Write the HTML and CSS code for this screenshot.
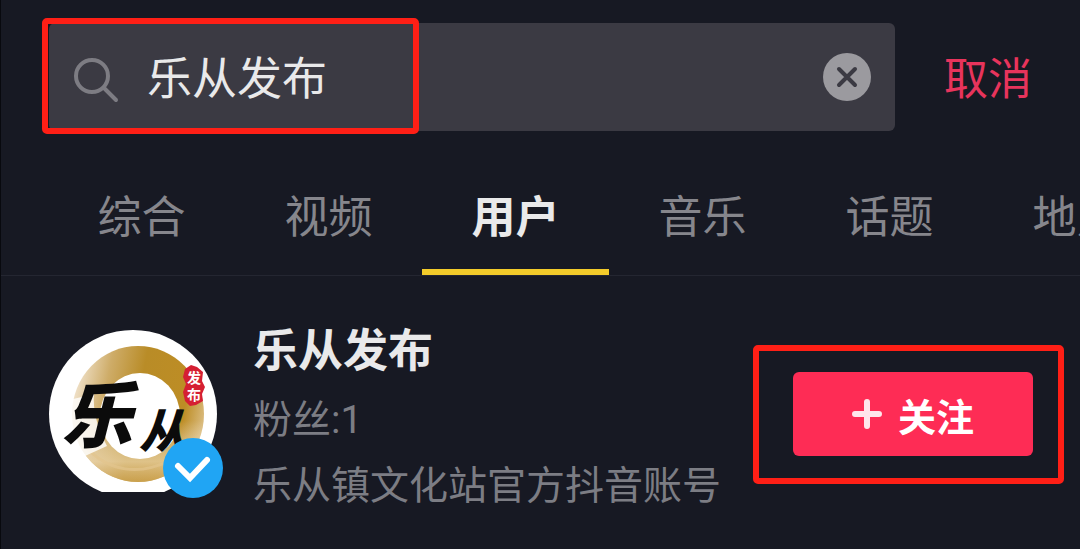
FILE: index.html
```html
<!DOCTYPE html>
<html lang="zh-CN">
<head>
    <meta charset="UTF-8">
    <meta name="viewport" content="width=device-width, initial-scale=1">
    <title>乐从发布</title>
    <link rel="stylesheet" href="styles.css">
</head>
<body>
    <form class="header">
        <div class="search-box">
            <label class="search-label" for="keyword" aria-label="搜索">
                <svg class="search-icon" viewBox="0 0 48 48" fill="none" stroke="#7d7c83" stroke-width="4" stroke-linecap="round">
                    <circle cx="19" cy="20" r="16"/>
                    <path d="M31 32L43 44"/>
                </svg>
            </label>
            <input class="search-input" type="text" id="keyword" value="乐从发布">
            <button class="clear-button" type="reset" aria-label="清除">
                <svg viewBox="0 0 48 48">
                    <circle cx="24" cy="24" r="24" fill="#9b9a9f"/>
                    <path d="M16 16L32 32M32 16L16 32" fill="none" stroke="#3b3a43" stroke-width="4" stroke-linecap="round"/>
                </svg>
            </button>
            <div class="mark mark-search"></div>
        </div>
        <button class="cancel-button" type="button">取消</button>
    </form>

    <nav class="tabs">
        <button class="tab">综合</button>
        <button class="tab">视频</button>
        <button class="tab active">用户</button>
        <button class="tab">音乐</button>
        <button class="tab">话题</button>
        <button class="tab">地点</button>
    </nav>

    <main class="user">
        <div class="avatar">
            <svg class="avatar-picture" viewBox="0 0 168 168">
                <defs>
                    <clipPath id="avatarShape">
                        <path d="M0 0H168V162H0Z"/>
                    </clipPath>
                    <linearGradient id="gold" x1="0" y1="0.3" x2="1" y2="0.5">
                        <stop offset="0" stop-color="#f3e6d2"/>
                        <stop offset="0.25" stop-color="#ceac68"/>
                        <stop offset="0.5" stop-color="#b98c27"/>
                        <stop offset="0.85" stop-color="#bd8d25"/>
                        <stop offset="1" stop-color="#d8b878"/>
                    </linearGradient>
                    <linearGradient id="fade" x1="0" y1="0" x2="0" y2="1">
                        <stop offset="0.55" stop-color="#fff" stop-opacity="0"/>
                        <stop offset="0.85" stop-color="#f2dfbd" stop-opacity="0.65"/>
                        <stop offset="1" stop-color="#d9b473" stop-opacity="0.5"/>
                    </linearGradient>
                </defs>
                <g clip-path="url(#avatarShape)">
                    <circle cx="84" cy="84" r="84" fill="#fff"/>
                    <ellipse cx="89" cy="84" rx="66" ry="68" fill="url(#gold)"/>
                    <ellipse cx="89" cy="84" rx="66" ry="68" fill="url(#fade)"/>
                    <path d="M36 116C60 143 91 145 120 131" fill="none" stroke="#e3c48d" stroke-width="3" opacity="0.7"/>
                    <ellipse cx="91" cy="86" rx="40" ry="43" fill="#fff"/>
                    <path d="M20 70Q20 107 36 126L58 116Q43 88 45 64Z" fill="#fff" opacity="0.8"/>
                    <path d="M136 39L142 35L148 37L154 42L153 51L156 57L153 64L154 71L147 75L141 76L136 71L134 62L137 54L134 47Z" fill="#d51f32"/>
                    <text class="seal-text" x="138" y="53">发</text>
                    <text class="seal-text" x="138" y="70">布</text>
                    <text class="brush-large" x="12" y="112">乐</text>
                    <text class="brush-small" x="90" y="118">从</text>
                </g>
            </svg>
            <svg class="verified" viewBox="0 0 60 60">
                <circle cx="30" cy="30" r="30" fill="#20a5f4"/>
                <path d="M15 28L27 40L44 22" fill="none" stroke="#fff" stroke-width="6" stroke-linecap="round" stroke-linejoin="miter"/>
            </svg>
        </div>
        <div class="user-info">
            <h1 class="user-name">乐从发布</h1>
            <p class="user-text">粉丝:1</p>
            <p class="user-text">乐从镇文化站官方抖音账号</p>
        </div>
        <div class="follow">
            <button class="follow-button">
                <svg class="plus-icon" viewBox="0 0 30 30" fill="none" stroke="#ffe6eb" stroke-width="6" stroke-linecap="round">
                    <path d="M15 3V27M3 15H27"/>
                </svg>
                关注
            </button>
            <div class="mark mark-follow"></div>
        </div>
    </main>
</body>
</html>
```
FILE: styles.css
```css
* {
    box-sizing: border-box;
}

body {
    margin: 0;
    min-height: 100vh;
    border-left: 1px solid #08090e;
    background-color: #171923;
    color: #e9e9ea;
    font-family: Roboto, "Noto Sans CJK SC", sans-serif;
    overflow-x: hidden;
}

button {
    padding: 0;
    border: none;
    background: none;
    color: inherit;
    font-family: inherit;
    cursor: pointer;
}

svg {
    display: block;
}

.header {
    display: flex;
    align-items: center;
    gap: 49px;
    padding: 23px 48px 0;
}

.search-box {
    position: relative;
    flex: 1;
    min-width: 0;
    display: flex;
    align-items: center;
    height: 108px;
    padding: 0 24px;
    border-radius: 6px;
    background-color: #3b3a43;
}

.search-label {
    padding-top: 6px;
}

.search-icon {
    width: 48px;
    height: 48px;
}

.search-input {
    flex: 1;
    min-width: 0;
    height: 72px;
    padding: 0 0 4px 26px;
    border: none;
    outline: none;
    background: none;
    color: #e9e9ea;
    font-family: inherit;
    font-size: 45px;
}

.clear-button {
    width: 48px;
    height: 48px;
}

.cancel-button {
    padding-top: 6px;
    color: #e8345c;
    font-size: 44px;
    line-height: 72px;
}

.tabs {
    display: flex;
    margin-top: 24px;
    padding-left: 47px;
    border-bottom: 1px solid #242631;
    overflow: hidden;
}

.tab {
    flex: 0 0 187px;
    padding: 25px 0 13px;
    border-bottom: 6px solid transparent;
    color: #86868c;
    font-size: 44px;
    line-height: 76px;
}

.tab.active {
    border-bottom-color: #f3cb2a;
    color: #e9e9ea;
    font-weight: bold;
}

.user {
    display: flex;
    align-items: center;
    padding: 33px 47px 0 48px;
}

.avatar {
    position: relative;
    flex: none;
    width: 168px;
    height: 168px;
}

.avatar-picture {
    width: 168px;
    height: 168px;
}

.brush-large,
.brush-small {
    font-style: italic;
    font-weight: 900;
    fill: #0b0b0b;
}

.brush-large {
    font-size: 72px;
}

.brush-small {
    font-size: 46px;
}

.seal-text {
    font-size: 14px;
    font-weight: bold;
    fill: #fff;
}

.verified {
    position: absolute;
    right: -6px;
    bottom: 0;
    width: 60px;
    height: 60px;
}

.user-info {
    flex: 1;
    min-width: 0;
    padding: 8px 0 0 36px;
}

.user-name {
    margin: 0;
    font-size: 45px;
    line-height: 70px;
}

.user-text {
    margin: 0;
    color: #7c7d84;
    font-size: 39px;
    line-height: 66px;
    white-space: nowrap;
}

.follow {
    position: relative;
    flex: none;
}

.follow-button {
    display: flex;
    align-items: center;
    justify-content: center;
    gap: 16px;
    width: 240px;
    height: 84px;
    border-radius: 6px;
    background-color: #fe2c55;
    color: #fff;
    font-size: 38px;
    font-weight: bold;
}

.plus-icon {
    width: 30px;
    height: 30px;
}

/* red highlight frames */
.mark {
    position: absolute;
    border: 6px solid #ff1f16;
    border-radius: 5px;
    pointer-events: none;
}

.mark-search {
    left: -7px;
    top: -5px;
    bottom: -3px;
    width: 377px;
}

.mark-follow {
    top: -27px;
    right: -31px;
    bottom: -28px;
    left: -40px;
}
```
